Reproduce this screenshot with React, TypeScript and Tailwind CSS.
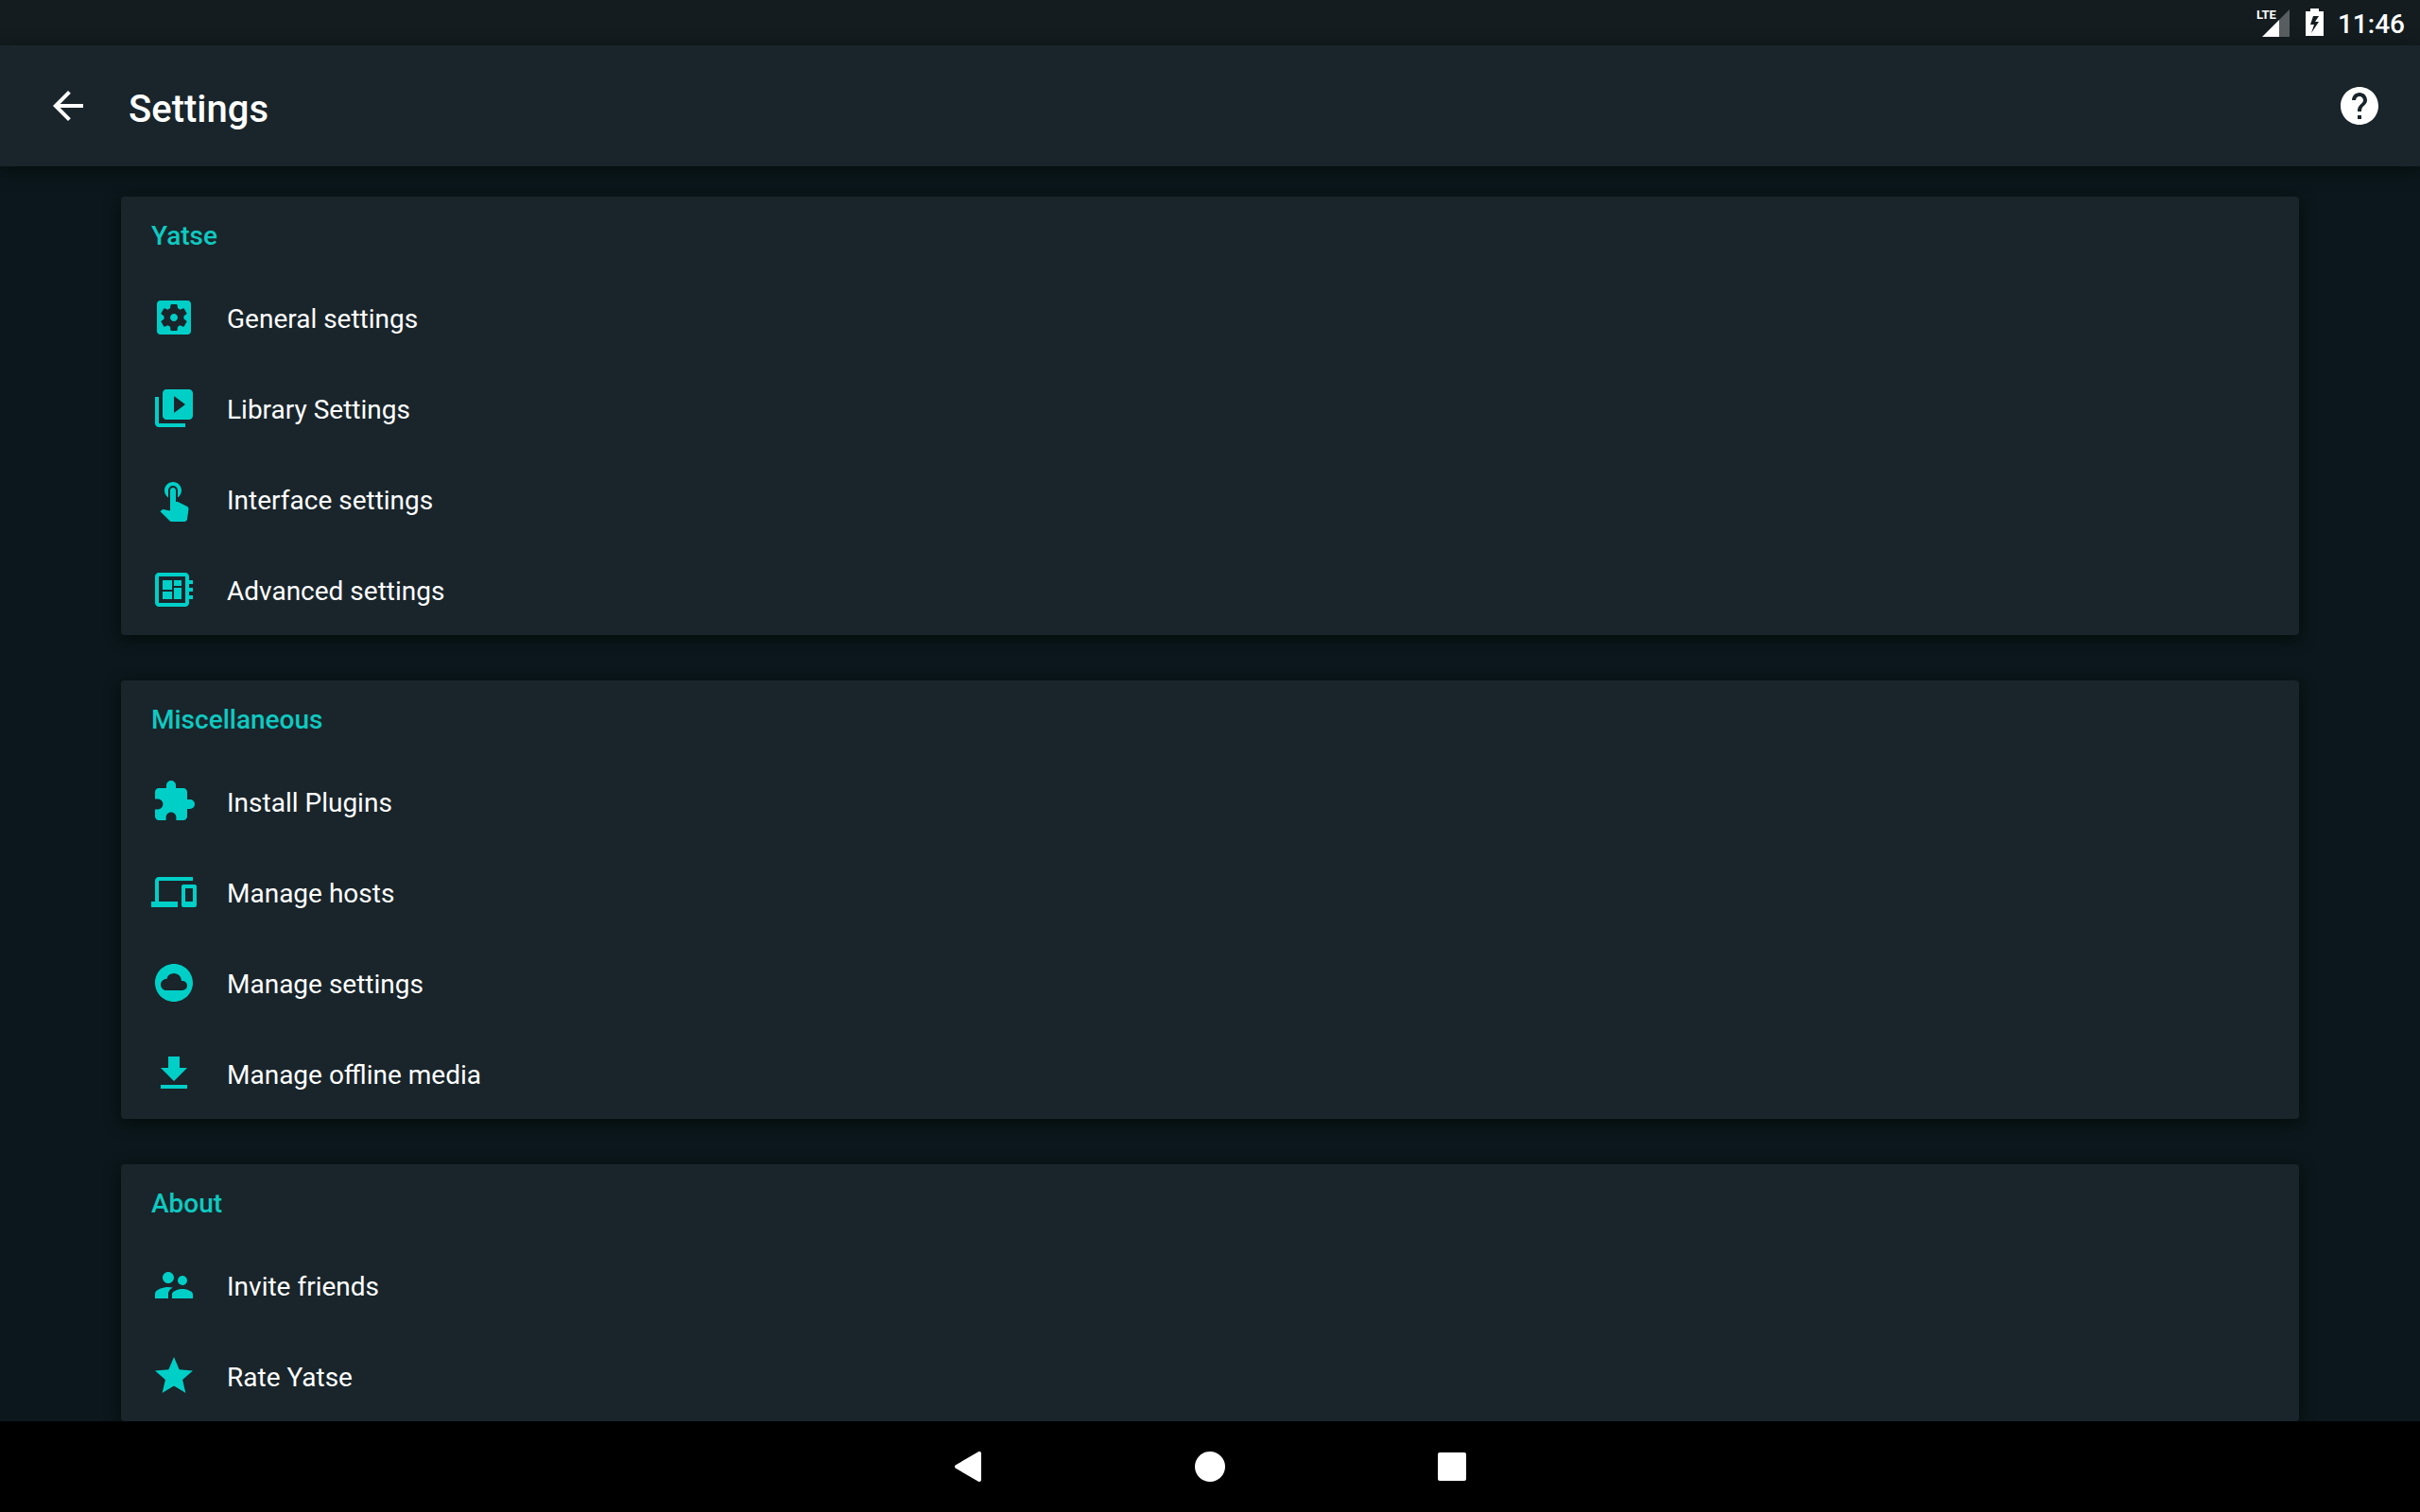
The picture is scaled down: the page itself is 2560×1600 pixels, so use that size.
import React from "react";
import type { IconType } from "react-icons";
import {
  MdArrowBack,
  MdCloudCircle,
  MdDeveloperBoard,
  MdDevices,
  MdExtension,
  MdGetApp,
  MdHelp,
  MdSettingsApplications,
  MdStar,
  MdSupervisorAccount,
  MdTouchApp,
  MdVideoLibrary,
} from "react-icons/md";

interface SettingsItem {
  label: string;
  icon: IconType;
}

interface SettingsGroup {
  title: string;
  items: SettingsItem[];
}

const groups: SettingsGroup[] = [
  {
    title: "Yatse",
    items: [
      { label: "General settings", icon: MdSettingsApplications },
      { label: "Library Settings", icon: MdVideoLibrary },
      { label: "Interface settings", icon: MdTouchApp },
      { label: "Advanced settings", icon: MdDeveloperBoard },
    ],
  },
  {
    title: "Miscellaneous",
    items: [
      { label: "Install Plugins", icon: MdExtension },
      { label: "Manage hosts", icon: MdDevices },
      { label: "Manage settings", icon: MdCloudCircle },
      { label: "Manage offline media", icon: MdGetApp },
    ],
  },
  {
    title: "About",
    items: [
      { label: "Invite friends", icon: MdSupervisorAccount },
      { label: "Rate Yatse", icon: MdStar },
    ],
  },
];

const StatusBar: React.FC = () => (
  <div className="flex h-12 shrink-0 items-center justify-end bg-[#141c1f] pr-4">
    <div className="relative mr-4 h-8 w-9">
      <span className="absolute top-0 left-0 text-[13px] leading-4 font-bold">LTE</span>
      <svg viewBox="0 0 36 32" className="h-8 w-9" aria-hidden="true">
        <path d="M35 2v29H24V13z" fill="#585e60" />
        <path d="M24 13v18H6z" fill="#fff" />
      </svg>
    </div>
    <svg viewBox="0 0 20 30" className="mr-3.5 h-[30px] w-5" aria-hidden="true">
      <path
        fillRule="evenodd"
        d="M5 0h9v3h5v26H0V3h5zM8 8L5 17h4L6 26l8-12h-4l4-6z"
        fill="#fff"
      />
    </svg>
    <time className="pt-1 text-[28px] leading-8 font-medium">11:46</time>
  </div>
);

const AppBar: React.FC = () => (
  <header className="relative z-10 flex h-32 shrink-0 items-center bg-[#19252b] px-10 shadow-[0_4px_16px_rgba(0,8,4,0.6)]">
    <button type="button" aria-label="Back" className="ml-2 mr-10">
      <MdArrowBack className="size-12" />
    </button>
    <h1 className="flex-1 pt-2 text-[40px] leading-12 font-medium">Settings</h1>
    <button type="button" aria-label="Help">
      <MdHelp className="size-12" />
    </button>
  </header>
);

const GroupCard: React.FC<{ group: SettingsGroup }> = ({ group }) => (
  <section className="shrink-0 rounded-sm bg-[#19252b] shadow-[0_4px_16px_rgba(0,8,4,0.7)]">
    <h2 className="flex h-20 items-center px-8 pt-1 text-[28px] leading-8 font-medium text-[#0fc9c0]">
      {group.title}
    </h2>
    <ul>
      {group.items.map(({ label, icon: Icon }) => (
        <li key={label}>
          <button type="button" className="flex h-24 w-full items-center gap-8 px-8 text-left">
            <Icon className="size-12 text-[#00cfc8]" />
            <span className="pt-1 text-[28px] leading-8">{label}</span>
          </button>
        </li>
      ))}
    </ul>
  </section>
);

const NavBar: React.FC = () => (
  <nav className="flex h-24 shrink-0 justify-center bg-black">
    <button type="button" aria-label="Back" className="flex w-64 items-center justify-center">
      <svg viewBox="0 0 32 32" className="size-8" aria-hidden="true">
        <path d="M28 2v28L4 16z" fill="#fff" stroke="#fff" strokeWidth="4" strokeLinejoin="round" />
      </svg>
    </button>
    <button type="button" aria-label="Home" className="flex w-64 items-center justify-center">
      <span className="size-8 rounded-full bg-white" />
    </button>
    <button type="button" aria-label="Recent apps" className="flex w-64 items-center justify-center">
      <span className="size-[30px] rounded-xs bg-white" />
    </button>
  </nav>
);

export default function App() {
  return (
    <div className="flex h-screen flex-col bg-[#0b171c] font-['Roboto',sans-serif] text-white">
      <StatusBar />
      <AppBar />
      <main className="flex min-h-0 flex-1 flex-col gap-12 overflow-hidden px-32 pt-8">
        {groups.map((group) => (
          <GroupCard key={group.title} group={group} />
        ))}
      </main>
      <NavBar />
    </div>
  );
}
